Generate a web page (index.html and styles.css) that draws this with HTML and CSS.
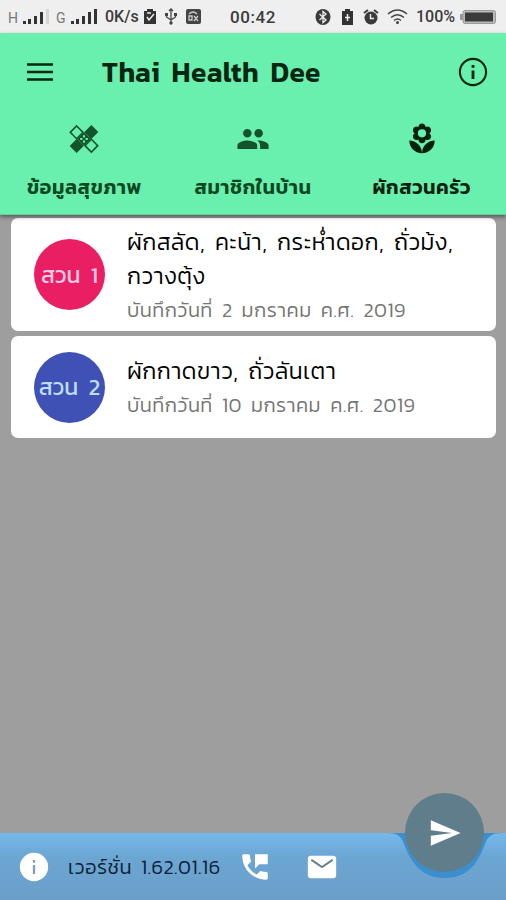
FILE: index.html
```html
<!DOCTYPE html>
<html lang="th">
<head>
  <meta charset="utf-8">
  <title>Thai Health Dee</title>
  <link rel="stylesheet" href="styles.css">
</head>
<body>
  <!-- status bar -->
  <div class="status">
    <div class="status-left">
      <span class="net">H</span>
      <svg class="signal-h" width="26" height="16" viewBox="0 0 26 16"><path d="M0 12h3v3H0zM5 10h3v5H5zM11 7h3v8h-3zM17 3h3v12h-3z" fill="#333"/><path d="M23 0h3v15h-3z" fill="#d6d6d6"/></svg>
      <span class="net">G</span>
      <svg class="signal-g" width="26" height="16" viewBox="0 0 26 16"><path d="M0 12h3v3H0zM5 10h3v5H5zM11 7h3v8h-3zM17 3h3v12h-3zM23 0h3v15h-3z" fill="#333"/></svg>
      <span class="speed">0K/s</span>
      <svg class="clip" width="12" height="15" viewBox="0 0 12 15"><path d="M0 2h3V0h6v2h3v13H0z" fill="#333"/><path d="M3 8l2 3 5-6M3 4h4" fill="none" stroke="#eee" stroke-width="1.4"/></svg>
      <svg class="usb" width="12" height="17" viewBox="0 0 12 17"><path d="M6 1v14M1.500 6v3L6 12l4.500-3V6M4 3l2-2 2 2" fill="none" stroke="#444" stroke-width="1.300"/><circle cx="6" cy="15" r="1.700" fill="#444"/><path d="M0 5h3v3H0zM9 5h3v3H9z" fill="#444"/></svg>
      <svg class="app" width="15" height="15" viewBox="0 0 15 15"><rect width="15" height="15" rx="2" fill="#444"/><path d="M3 5q4-4 8 0M3 7v4h3V7zM8 7l4 5M12 7l-4 5" fill="none" stroke="#ccc" stroke-width="1.300"/></svg>
    </div>
    <span class="clock">00:42</span>
    <div class="status-right">
      <svg width="16" height="16" viewBox="0 0 16 16"><ellipse cx="8" cy="8" rx="7.500" ry="8" fill="#3b3b3b"/><path d="M4.500 5l6.500 6-3 2.500v-11L11 5l-6.500 6" fill="none" stroke="#eee" stroke-width="1.300"/></svg>
      <svg class="batt-small" width="11" height="16" viewBox="0 0 11 16"><path d="M0 2h3V0h5v2h3v14H0z" fill="#333"/><path d="M5.500 5v7M3 8.500h5" stroke="#eee" stroke-width="1.500"/></svg>
      <svg class="alarm" width="16" height="16" viewBox="0 0 16 16"><circle cx="8" cy="9" r="6.500" fill="#3b3b3b"/><path d="M1 4l4-3M15 4l-4-3" stroke="#3b3b3b" stroke-width="2"/><path d="M7.500 5v4.500H11" fill="none" stroke="#eee" stroke-width="1.400"/></svg>
      <svg class="wifi" width="21" height="15" viewBox="0 0 21 15"><path d="M1 5q9.500-8 19 0M4 8.500q6.500-5.500 13 0M7 11.500q3.500-3 7 0" fill="none" stroke="#444" stroke-width="1.500"/><circle cx="10.500" cy="13.500" r="1.500" fill="#444"/></svg>
      <span class="percent">100%</span>
      <svg class="battery" width="36" height="14" viewBox="0 0 36 14"><rect x="3" y=".5" width="32.500" height="13" rx="2" fill="#bbb" stroke="#999"/><path d="M0 4h3v6H0z" fill="#999"/><path d="M5 2.500h28v9H5z" fill="#3b3b3b"/></svg>
    </div>
  </div>

  <!-- app bar with tabs -->
  <header class="appbar">
    <div class="toolbar">
      <svg class="menu" width="26" height="18" viewBox="0 0 26 18"><path d="M0 1.500h26M0 9h26M0 16.500h26" stroke="#062611" stroke-width="2.400"/></svg>
      <h1 class="title">Thai Health Dee</h1>
      <svg class="info" width="34" height="34" viewBox="0 0 24 24"><path fill="#062611" d="M11 7h2v2h-2zm0 4h2v6h-2zm1-9C6.480 2 2 6.480 2 12s4.480 10 10 10 10-4.480 10-10S17.520 2 12 2zm0 18.500c-4.690 0-8.500-3.810-8.500-8.500s3.810-8.500 8.500-8.500 8.500 3.810 8.500 8.500-3.810 8.500-8.500 8.500z"/></svg>
    </div>
    <nav class="tabs">
      <a class="tab">
        <svg width="34" height="34" viewBox="0 0 24 24"><path d="M6.800 2.800l4.500 4.500-4.500 4.500-4.500-4.500zM17.200 12.200l4.500 4.500-4.500 4.500-4.500-4.500z" fill="none" stroke="#14532b" stroke-width="1.100"/><path d="M17.200 2.200l4.900 4.900-5.100 5.100-4.900-4.900zM7 11.800l4.900 4.900-5.100 5.100-4.900-4.900z" fill="#14532b"/><path d="M12 7.300l4.700 4.700-4.700 4.700L7.300 12z" fill="#14532b"/><path d="M12 9.300v1.600M12 13.100v1.600M9.300 12h1.600M13.100 12h1.600" stroke="#69f0ae" stroke-width="1.500"/></svg>
        <span class="tab-label">ข้อมูลสุขภาพ</span>
      </a>
      <a class="tab">
        <svg width="34" height="34" viewBox="0 0 24 24"><path fill="#14532b" d="M16 11c1.660 0 2.990-1.340 2.990-3S17.660 5 16 5c-1.660 0-3 1.340-3 3s1.340 3 3 3zm-8 0c1.660 0 2.990-1.340 2.990-3S9.660 5 8 5C6.340 5 5 6.340 5 8s1.340 3 3 3zm0 2c-2.330 0-7 1.170-7 3.500V19h14v-2.500c0-2.330-4.670-3.500-7-3.500zm8 0c-.29 0-.62.020-.97.050 1.160.84 1.970 1.970 1.970 3.450V19h6v-2.500c0-2.330-4.670-3.500-7-3.500z"/></svg>
        <span class="tab-label">สมาชิกในบ้าน</span>
      </a>
      <a class="tab active">
        <svg width="34" height="34" viewBox="0 0 24 24"><path fill="#03210d" d="M12 22c4.970 0 9-4.030 9-9-4.970 0-9 4.030-9 9zM5.600 10.250c0 1.380 1.120 2.500 2.500 2.500.53 0 1.010-.16 1.420-.44l-.02.19c0 1.380 1.120 2.500 2.500 2.500s2.500-1.120 2.500-2.500l-.02-.19c.4.280.89.440 1.420.440 1.380 0 2.500-1.120 2.500-2.500 0-1-.59-1.850-1.430-2.250.84-.4 1.430-1.250 1.430-2.250 0-1.380-1.120-2.500-2.500-2.500-.53 0-1.010.16-1.420.440l.02-.19C14.500 2.120 13.380 1 12 1S9.500 2.120 9.500 3.500l.02.19c-.4-.28-.89-.44-1.420-.44-1.380 0-2.500 1.120-2.500 2.500 0 1 .59 1.850 1.430 2.250-.84.4-1.430 1.250-1.430 2.250zM12 5.100a2.900 2.900 0 1 1 0 5.800 2.900 2.900 0 0 1 0-5.800zM3 13c0 4.970 4.030 9 9 9 0-4.970-4.030-9-9-9z"/></svg>
        <span class="tab-label">ผักสวนครัว</span>
      </a>
    </nav>
  </header>

  <main class="list">
    <div class="card card-first">
      <div class="avatar pink"><span>สวน 1</span></div>
      <div class="card-text">
        <p class="name">ผักสลัด, คะน้า, กระห่ำดอก, ถั่วม้ง,<br>กวางตุ้ง</p>
        <p class="date">บันทึกวันที่ 2 มกราคม ค.ศ. 2019</p>
      </div>
    </div>
    <div class="card card-second">
      <div class="avatar blue"><span>สวน 2</span></div>
      <div class="card-text">
        <p class="name">ผักกาดขาว, ถั่วลันเตา</p>
        <p class="date">บันทึกวันที่ 10 มกราคม ค.ศ. 2019</p>
      </div>
    </div>
  </main>

  <!-- bottom bar -->
  <footer class="bottom">
    <svg class="notch" width="120" height="67" viewBox="0 0 120 67"><path d="M0 0C12 0 15 3 18 11C26 33 38 45 59 45S91 33 99 11C102 3 106 0 117 0z" fill="#3c8fce"/></svg>
    <svg class="about" width="34" height="34" viewBox="0 0 24 24"><circle cx="12" cy="12" r="10" fill="#fff"/><path fill="#7f9db5" d="M11.200 7h1.600v2h-1.600zM11.200 10.500h1.600V17h-1.600z"/></svg>
    <span class="version">เวอร์ชั่น 1.62.01.16</span>
    <svg class="phone" width="34" height="34" viewBox="0 0 24 24"><path fill="#fff" d="M20 15.500c-1.250 0-2.450-.2-3.570-.57-.35-.11-.74-.03-1.020.24l-2.200 2.200c-2.830-1.440-5.150-3.750-6.590-6.580l2.200-2.210c.28-.27.36-.66.25-1.010C8.700 6.450 8.500 5.250 8.500 4c0-.55-.45-1-1-1H4c-.55 0-1 .45-1 1 0 9.390 7.610 17 17 17 .55 0 1-.45 1-1v-3.500c0-.55-.45-1-1-1zM12 3v10l3-3h6V3h-9z"/></svg>
    <svg class="mail" width="34" height="34" viewBox="0 0 24 24"><path fill="#fff" d="M20 4H4c-1.100 0-1.990.9-1.990 2L2 18c0 1.100.9 2 2 2h16c1.100 0 2-.9 2-2V6c0-1.100-.9-2-2-2z"/><path d="M4.500 7l7.500 5 7.500-5" fill="none" stroke="#688087" stroke-width="1.400"/></svg>
    <div class="fab"><svg width="34" height="34" viewBox="0 0 24 24"><path fill="#fff" d="M2.010 21L23 12 2.010 3 2 10l15 2-15 2z"/></svg></div>
  </footer>
</body>
</html>
```

FILE: styles.css
```css
* {
  box-sizing: border-box;
}

body {
  margin: 0;
  width: 506px;
  height: 900px;
  display: flex;
  flex-direction: column;
  overflow: hidden;
  background-color: #9e9e9e;
  font-family: Kanit, Prompt, "Noto Sans Thai", "Noto Sans", sans-serif;
  white-space: nowrap;
}

svg {
  display: block;
  flex: none;
}

h1, p {
  margin: 0;
}

.status {
  height: 33px;
  flex: none;
  display: flex;
  align-items: center;
  background-color: #efefef;
  color: #3b3b3b;
  font-family: Roboto, sans-serif;
  font-size: 16px;
}

.status-left {
  display: flex;
  align-items: center;
  padding-left: 8px;
  width: 230px;
}

.net {
  font-size: 14px;
  color: #777;
  width: 15px;
  padding-top: 3px;
}

.signal-h {
  margin-right: 7px;
}

.speed {
  margin-left: 8px;
  width: 34px;
  font-size: 16px;
  font-weight: 500;
}

.clip {
  margin-left: 5px;
}

.usb {
  margin-left: 9px;
}

.app {
  margin-left: 9px;
}

.clock {
  font-size: 17px;
  font-weight: 500;
  letter-spacing: 0.6px;
}

.status-right {
  margin-left: auto;
  padding-right: 10px;
  display: flex;
  align-items: center;
}

.batt-small {
  margin-left: 11px;
}

.alarm {
  margin-left: 10px;
}

.wifi {
  margin-left: 8px;
}

.percent {
  margin-left: 8px;
  width: 40px;
  font-size: 16px;
  font-weight: 500;
}

.battery {
  margin-left: 4px;
}

.appbar {
  height: 182px;
  flex: none;
  background-color: #69f0ae;
  box-shadow: 0 2px 4px rgba(0, 0, 0, 0.45);
  border-bottom: 1px solid #5ed295;
  position: relative;
  z-index: 1;
}

.toolbar {
  height: 78px;
  display: flex;
  align-items: center;
  padding: 0 16px 0 27px;
}

.title {
  margin-left: 49px;
  font-size: 28px;
  font-weight: 600;
  letter-spacing: 0.4px;
  word-spacing: 5px;
  color: #062611;
}

.info {
  margin-left: auto;
}

.tabs {
  display: grid;
  grid-template-columns: 1fr 1fr 1fr;
}

.tab {
  display: flex;
  flex-direction: column;
  align-items: center;
  padding-top: 11px;
  color: #0b4721;
}

.tab-label {
  margin-top: 11px;
  height: 40px;
  line-height: 40px;
  font-size: 20px;
  font-weight: 600;
  letter-spacing: 0.55px;
}

.active {
  color: #03210d;
}

.list {
  flex: 1;
  padding: 3px 10px 0 11px;
}

.card {
  display: flex;
  align-items: center;
  padding-left: 23px;
  margin-bottom: 5px;
  border-radius: 7px;
  background-color: #fff;
}

.card-first {
  height: 113px;
}

.card-second {
  height: 102px;
}

.avatar {
  width: 71px;
  height: 71px;
  border-radius: 50%;
  display: flex;
  flex: none;
  align-items: center;
  justify-content: center;
  font-size: 23px;
  word-spacing: 5px;
}

.pink {
  background-color: #e91e63;
  color: #f8cbe2;
}

.blue {
  background-color: #3f51b5;
  color: #bbdefb;
}

.card-text {
  margin-left: 22px;
  padding-top: 2px;
}

.name {
  font-size: 23px;
  font-weight: 300;
  line-height: 34px;
  letter-spacing: 0.5px;
  word-spacing: 4px;
  color: #000;
}

.date {
  font-size: 20px;
  font-weight: 300;
  line-height: 34px;
  letter-spacing: 0.5px;
  word-spacing: 4px;
  color: #757575;
}

.bottom {
  height: 67px;
  flex: none;
  display: flex;
  align-items: center;
  padding-left: 17px;
  background: linear-gradient(#76b8ec, #6ca6d3 35%, #6b9fc9);
  position: relative;
}

.version {
  margin-left: 17px;
  width: 153px;
  font-size: 20px;
  font-weight: 300;
  letter-spacing: 0.5px;
  word-spacing: 4px;
  color: #0c2036;
}

.phone {
  margin-left: 17px;
}

.mail {
  margin-left: 33px;
}

.notch {
  position: absolute;
  left: 386px;
  top: 0;
}

.fab {
  position: absolute;
  left: 405px;
  top: -40px;
  width: 79px;
  height: 79px;
  border-radius: 50%;
  background-color: #607d8b;
  display: flex;
  align-items: center;
  justify-content: center;
}
```
